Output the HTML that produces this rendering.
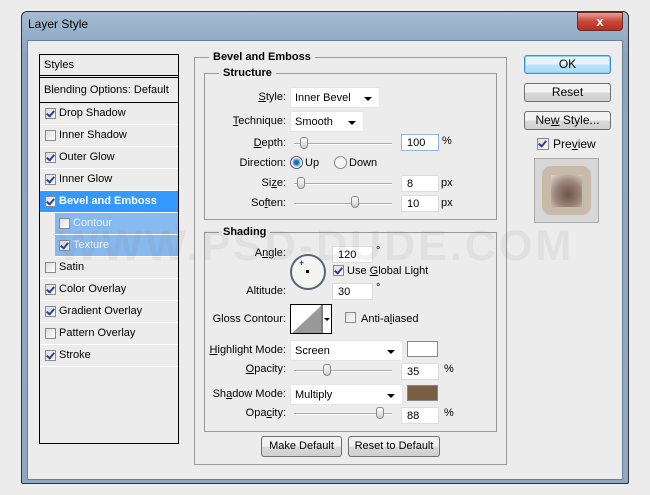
<!DOCTYPE html>
<html><head><meta charset="utf-8"><style>
*{box-sizing:border-box;margin:0;padding:0}
body{width:650px;height:495px;background:#ececec;position:relative;overflow:hidden;font-family:"Liberation Sans",Arial,sans-serif;font-size:11px;color:#000}
.a{position:absolute}
.win{left:21px;top:11px;width:608px;height:473px;border:1px solid #333;border-radius:6px 6px 2px 2px;background:linear-gradient(#a5bbd3,#8aa5c2 40px,#8ea8c4);}
.client{left:27px;top:40px;width:596px;height:440px;background:#ececec;border:1px solid #6a7e96}
.lp{left:39px;top:54px;width:140px;height:390px;border:1px solid #000;background:#ececec}
.row{position:absolute;left:0;width:138px;height:22px;border-bottom:1px solid #fff;line-height:21px;padding-left:19px}
.cb{position:absolute;width:11px;height:11px;border:1px solid #8a8a8a;background:linear-gradient(135deg,#ddd,#fff)}
.cb.on::after{content:"";position:absolute;left:2px;top:0px;width:3px;height:6px;border:solid #2a3f9a;border-width:0 2px 2px 0;transform:rotate(40deg)}
.fs{position:absolute;border:1px solid #999}
.lg{position:absolute;background:#ececec;font-weight:bold;padding:0 4px}
.lb{position:absolute;text-align:right;width:90px}
.dd{position:absolute;background:#fff;border:1px solid #e6e6e6;height:21px;line-height:21px;padding-left:4px}
.dd::after{content:"";position:absolute;right:7px;top:9px;border:4px solid transparent;border-top:4px solid #000;border-bottom:0}
.in{position:absolute;background:#fff;border:1px solid #ddd;height:17px;line-height:17px;padding-left:5px;width:38px}
.sl{position:absolute;height:2px;border-top:1px solid #aaa;border-bottom:1px solid #fff;width:98px}
.th{position:absolute;width:8px;height:12px;border:1px solid #888;border-radius:3px 3px 4px 4px;background:linear-gradient(#fff,#ccc)}
.btn{position:absolute;border:1px solid #707070;border-radius:3px;background:linear-gradient(#f2f2f2 50%,#d9d9d9 51%,#cfcfcf);text-align:center;font-size:12px;line-height:16px}
u{text-decoration:underline}
</style></head><body>
<div class="a win"></div>
<div class="a" style="left:28px;top:17px;font-size:12px;color:#000">Layer Style</div>
<div class="a" style="left:577px;top:12px;width:46px;height:19px;border:1px solid #6b2a22;border-radius:0 0 4px 4px;background:linear-gradient(#e8a095,#c8473a 50%,#b5301f);color:#fff;font-weight:bold;text-align:center;line-height:17px;font-size:13px">x</div>
<div class="a client"></div>

<div class="a lp">
 <div class="row" style="top:0;height:23px;padding-left:4px;border-bottom:3px double #000">Styles</div>
 <div class="row" style="top:25px;height:23px;padding-left:4px;border-bottom:1px solid #000">Blending Options: Default</div>
 <div class="row" style="top:48px"><span class="cb on" style="left:5px;top:5px"></span>Drop Shadow</div>
 <div class="row" style="top:70px"><span class="cb" style="left:5px;top:5px"></span>Inner Shadow</div>
 <div class="row" style="top:92px"><span class="cb on" style="left:5px;top:5px"></span>Outer Glow</div>
 <div class="row" style="top:114px"><span class="cb on" style="left:5px;top:5px"></span>Inner Glow</div>
 <div class="row" style="top:136px;background:#3399ff;color:#fff;font-weight:bold"><span class="cb on" style="left:5px;top:5px"></span>Bevel and Emboss</div>
 <div class="row" style="top:158px;left:15px;width:123px;background:#88b9ee;color:#e8f0fa;padding-left:18px"><span class="cb" style="left:4px;top:5px"></span>Contour</div>
 <div class="row" style="top:180px;left:15px;width:123px;background:#88b9ee;color:#f4f8fc;padding-left:18px"><span class="cb on" style="left:4px;top:5px"></span>Texture</div>
 <div class="row" style="top:202px"><span class="cb" style="left:5px;top:5px"></span>Satin</div>
 <div class="row" style="top:224px"><span class="cb on" style="left:5px;top:5px"></span>Color Overlay</div>
 <div class="row" style="top:246px"><span class="cb on" style="left:5px;top:5px"></span>Gradient Overlay</div>
 <div class="row" style="top:268px"><span class="cb" style="left:5px;top:5px"></span>Pattern Overlay</div>
 <div class="row" style="top:290px"><span class="cb on" style="left:5px;top:5px"></span>Stroke</div>
</div>

<div class="fs" style="left:194px;top:57px;width:313px;height:408px"></div>
<div class="lg" style="left:209px;top:51px">Bevel and Emboss</div>
<div class="fs" style="left:204px;top:73px;width:293px;height:147px"></div>
<div class="lg" style="left:219px;top:67px">Structure</div>
<div class="lb" style="left:196px;top:91px"><u>S</u>tyle:</div>
<div class="dd" style="left:290px;top:87px;width:90px">Inner Bevel</div>
<div class="lb" style="left:196px;top:115px"><u>T</u>echnique:</div>
<div class="dd" style="left:290px;top:111px;width:74px">Smooth</div>
<div class="lb" style="left:196px;top:137px"><u>D</u>epth:</div>
<div class="sl" style="left:294px;top:143px"></div><div class="th" style="left:300px;top:137px"></div>
<div class="in" style="left:401px;top:134px;border-color:#8fb8dc">100</div><div class="a" style="left:442px;top:135px">%</div>
<div class="lb" style="left:196px;top:157px">Direction:</div>
<div class="a" style="left:290px;top:156px;width:13px;height:13px;border-radius:50%;border:1px solid #555;background:radial-gradient(#1a6fb0 2px,#5aa8de 3px,#fff 5px)"></div>
<div class="a" style="left:305px;top:157px">Up</div>
<div class="a" style="left:334px;top:156px;width:13px;height:13px;border-radius:50%;border:1px solid #888;background:#f4f4f4"></div>
<div class="a" style="left:349px;top:157px">Down</div>
<div class="lb" style="left:196px;top:177px">Si<u>z</u>e:</div>
<div class="sl" style="left:294px;top:183px"></div><div class="th" style="left:297px;top:177px"></div>
<div class="in" style="left:401px;top:175px">8</div><div class="a" style="left:441px;top:177px">px</div>
<div class="lb" style="left:196px;top:197px">So<u>f</u>ten:</div>
<div class="sl" style="left:294px;top:203px"></div><div class="th" style="left:351px;top:196px"></div>
<div class="in" style="left:401px;top:195px">10</div><div class="a" style="left:441px;top:197px">px</div>

<div class="fs" style="left:204px;top:232px;width:293px;height:200px"></div>
<div class="lg" style="left:219px;top:226px">Shading</div>
<div class="lb" style="left:196px;top:247px">A<u>n</u>gle:</div>
<div class="in" style="left:332px;top:246px;width:41px">120</div><div class="a" style="left:376px;top:245px">°</div>
<div class="a" style="left:290px;top:254px;width:36px;height:36px;border-radius:50%;border:2px solid #5a6478;background:#f4f4f0"></div>
<div class="a" style="left:306px;top:270px;width:3px;height:3px;background:#000"></div>
<div class="a" style="left:299px;top:258px;font-size:9px">+</div>
<div class="cb on" style="left:333px;top:265px"></div><div class="a" style="left:347px;top:265px">Use <u>G</u>lobal Light</div>
<div class="lb" style="left:196px;top:285px">Altitude:</div>
<div class="in" style="left:332px;top:283px;width:41px">30</div><div class="a" style="left:376px;top:282px">°</div>
<div class="lb" style="left:196px;top:313px">Gloss Contour:</div>
<div class="a" style="left:290px;top:304px;width:42px;height:30px;border:1px solid #000;background:#fff">
 <svg width="40" height="28" style="position:absolute;left:0;top:0"><polygon points="1,28 30,1 30,28" fill="#999"/><line x1="31" y1="0" x2="31" y2="28" stroke="#000"/><polygon points="33,13 39,13 36,16" fill="#000"/></svg></div>
<div class="cb" style="left:345px;top:312px"></div><div class="a" style="left:361px;top:313px">Anti-a<u>l</u>iased</div>
<div class="lb" style="left:196px;top:344px"><u>H</u>ighlight Mode:</div>
<div class="dd" style="left:290px;top:340px;width:113px">Screen</div>
<div class="a" style="left:407px;top:341px;width:31px;height:16px;border:1px solid #888;background:#fff"></div>
<div class="lb" style="left:196px;top:363px"><u>O</u>pacity:</div>
<div class="sl" style="left:294px;top:370px"></div><div class="th" style="left:323px;top:364px"></div>
<div class="in" style="left:401px;top:363px">35</div><div class="a" style="left:444px;top:363px">%</div>
<div class="lb" style="left:196px;top:388px">Sh<u>a</u>dow Mode:</div>
<div class="dd" style="left:290px;top:384px;width:113px">Multiply</div>
<div class="a" style="left:407px;top:385px;width:31px;height:16px;border:1px solid #888;background:#7a5e43"></div>
<div class="lb" style="left:196px;top:407px">Opa<u>c</u>ity:</div>
<div class="sl" style="left:294px;top:413px"></div><div class="th" style="left:376px;top:407px"></div>
<div class="in" style="left:401px;top:407px">88</div><div class="a" style="left:444px;top:407px">%</div>

<div class="btn" style="left:261px;top:436px;width:81px;height:21px;line-height:19px;font-size:11px">Make Default</div>
<div class="btn" style="left:348px;top:436px;width:92px;height:21px;line-height:19px;font-size:11px">Reset to Default</div>

<div class="btn" style="left:524px;top:55px;width:87px;height:19px;border-color:#3c8fd0;background:linear-gradient(#e6f4fc 50%,#bfe2f8 51%,#a8d8f6);box-shadow:inset 0 0 0 1px #8fd0f5">OK</div>
<div class="btn" style="left:524px;top:83px;width:87px;height:19px">Reset</div>
<div class="btn" style="left:524px;top:111px;width:87px;height:19px">Ne<u>w</u> Style...</div>
<div class="cb on" style="left:537px;top:138px;width:12px;height:12px"></div>
<div class="a" style="left:553px;top:137px;font-size:12px">Pre<u>v</u>iew</div>
<div class="a" style="left:534px;top:158px;width:65px;height:65px;border:1px solid #aaa;background:#d7d7d7"></div>
<div class="a" style="left:542px;top:166px;width:49px;height:49px;border-radius:9px;background:#c8baa9"></div>
<div class="a" style="left:551px;top:175px;width:31px;height:32px;background:radial-gradient(circle at 55% 60%,#6e5548,#9a8478 50%,#e0d8d2)"></div>

<div class="a" style="left:58px;top:222px;font-size:43px;font-weight:bold;color:rgba(120,120,120,0.1);letter-spacing:3px;white-space:nowrap">WWW.PSD-DUDE.COM</div>
</body></html>
